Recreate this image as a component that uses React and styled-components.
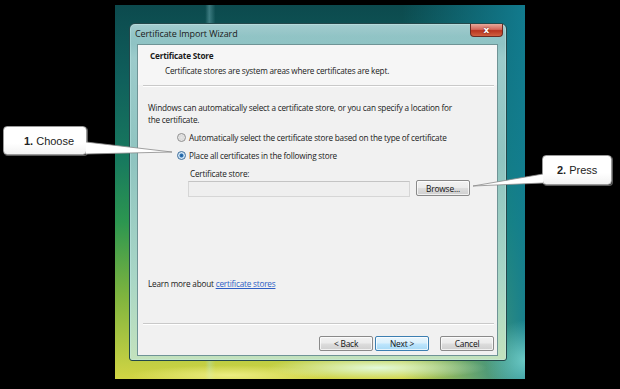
import React from "react";
import styled, { createGlobalStyle } from "styled-components";

const Global = createGlobalStyle`
  html, body { margin: 0; padding: 0; background: #000; }
  body { width: 620px; height: 389px; overflow: hidden; font-family: "Open Sans", "Noto Sans", sans-serif; }
  #root { width: 620px; height: 389px; }
`;

const Stage = styled.div`
  position: relative;
  width: 620px;
  height: 389px;
  background: #000;
  padding: 5px 0 0 115px;
  box-sizing: border-box;
`;

const Wallpaper = styled.div`
  width: 410px;
  height: 374px;
  box-sizing: border-box;
  padding: 18px 0 0 14px;
  background:
    radial-gradient(ellipse 110px 12px at 64% 97%, rgba(230, 255, 235, 0.9), rgba(230,255,235,0) 100%),
    radial-gradient(ellipse 100px 10px at 28% 99%, rgba(245, 245, 150, 0.75), rgba(245,245,150,0) 100%),
    radial-gradient(ellipse 40px 40px at 100% 95%, rgba(140, 230, 220, 0.7), rgba(140,230,220,0) 100%),
    linear-gradient(90deg, rgba(0,0,0,0) 0%, rgba(0,0,0,0) 70%, rgba(18, 125, 145, 0.95) 100%),
    linear-gradient(90deg, rgba(0,0,0,0) 22%, rgba(170,230,240,0.3) 23%, rgba(0,0,0,0) 24.5%),
    linear-gradient(180deg, #0c4a4e 0%, #10605c 20%, #187a5e 42%, #2c9650 58%, #7fb43e 78%, #d2d544 100%);
`;

const Window = styled.div`
  width: 378px;
  height: 338px;
  display: flex;
  flex-direction: column;
  box-sizing: border-box;
  border: 1px solid #23484b;
  border-radius: 6px 6px 3px 3px;
  background: linear-gradient(180deg, #7db8bb 0%, #9ccbcb 10%, #8fc4c0 40%, #a8d6c6 75%, #c3e2bd 100%);
  box-shadow: 0 0 0 1px rgba(200, 240, 240, 0.35) inset;
`;

const TitleBar = styled.div`
  height: 19px;
  display: flex;
  align-items: center;
  justify-content: space-between;
  padding: 0 3px 1px 5px;
  background: linear-gradient(180deg, rgba(255,255,255,0.3) 0%, rgba(255,255,255,0.08) 60%, rgba(255,255,255,0) 100%);
  border-radius: 5px 5px 0 0;
`;

const Title = styled.span`
  font-size: 9px;
  color: #1a1a1a;
  letter-spacing: -0.1px;
`;

const CloseBtn = styled.div`
  width: 31px;
  height: 12px;
  margin-top: -6px;
  border: 1px solid #6b2a22;
  border-top: none;
  border-radius: 0 0 4px 4px;
  background: linear-gradient(180deg, #e6a89a 0%, #d4685a 45%, #b8341f 55%, #d06040 100%);
  display: flex;
  align-items: center;
  justify-content: center;
  color: #fff;
  font-family: "DejaVu Sans", sans-serif;
  font-weight: bold;
  font-size: 9px;
  line-height: 1;
  text-shadow: 0 0 2px #5a1a10;
`;

const Panel = styled.div`
  flex: 1;
  margin: 0 8px 4px 7px;
  border: 1px solid #6f9496;
  background: #f1f1f1;
  display: flex;
  flex-direction: column;
  font-size: 8.2px;
  color: #1a1a1a;
  letter-spacing: -0.2px;
`;

const Header = styled.div`
  height: 40px;
  box-sizing: border-box;
  padding: 5px 0 0 12px;
  background: #f6f6f6;
`;

const HeaderTitle = styled.div`
  font-weight: bold;
  line-height: 12px;
`;

const HeaderSub = styled.div`
  line-height: 12px;
  margin: 3px 0 0 15px;
`;

const Rule = styled.div`
  height: 1px;
  margin: 0 3px 0 5px;
  background: #c9c9c9;
  border-bottom: 1px solid #fff;
`;

const Body = styled.div`
  padding: 15px 0 0 10px;
  display: flex;
  flex-direction: column;
`;

const Para = styled.div`
  line-height: 12px;
  width: 310px;
`;

const RadioRow = styled.label`
  display: flex;
  align-items: center;
  gap: 3px;
  height: 12px;
  margin: ${(p) => p.$mt}px 0 0 29px;
`;

const RadioDot = styled.span`
  width: 7px;
  height: 7px;
  border-radius: 50%;
  border: 1px solid ${(p) => (p.$on ? "#3d6e9c" : "#8f8f8f")};
  background: ${(p) =>
    p.$on
      ? "radial-gradient(circle, #1f5c9a 0, #2f76b8 1.6px, #cfe4f5 2.4px, #e9f2fa 100%)"
      : "radial-gradient(circle, #e6e6e6 0, #dcdcdc 2px, #f4f4f4 100%)"};
  flex: none;
`;

const FieldLabel = styled.div`
  line-height: 12px;
  margin: 7px 0 0 42px;
`;

const FieldRow = styled.div`
  display: flex;
  align-items: flex-start;
  gap: 6px;
  margin: 0 0 0 40px;
`;

const Input = styled.div`
  width: 222px;
  height: 16px;
  margin-top: 1px;
  box-sizing: border-box;
  border: 1px solid #d6d6d6;
  border-top-color: #c4c4c4;
  background: #efefef;
`;

const Btn = styled.div`
  width: 54px;
  height: ${(p) => p.$h || 15}px;
  box-sizing: border-box;
  border: 1px solid ${(p) => (p.$def ? "#3c7fb1" : "#8a8a8a")};
  border-radius: 2px;
  background: ${(p) =>
    p.$def
      ? "linear-gradient(180deg, #eaf6fd 0%, #d9f0fc 48%, #bee6fd 52%, #a7d9f5 100%)"
      : "linear-gradient(180deg, #f2f2f2 0%, #ebebeb 48%, #dddddd 52%, #cfcfcf 100%)"};
  box-shadow: inset 0 0 0 1px rgba(255,255,255,0.7);
  display: flex;
  align-items: center;
  justify-content: center;
  font-size: 8.4px;
  color: #111;
`;

const Learn = styled.div`
  line-height: 12px;
  margin-top: 81px;
`;

const Link = styled.a`
  color: #2f5fc4;
  text-decoration: underline;
`;

const FooterRule = styled(Rule)`
  margin-top: 33px;
`;

const Footer = styled.div`
  display: flex;
  justify-content: flex-end;
  gap: 2px;
  padding: 11px 3px 0 0;
`;

const Gap = styled.span`
  width: 7px;
`;

const Callout = styled.div`
  position: absolute;
  left: ${(p) => p.$x}px;
  top: ${(p) => p.$y}px;
  width: ${(p) => p.$w}px;
  height: ${(p) => p.$h}px;
  box-sizing: border-box;
  border: 1px solid #9a9a9a;
  border-radius: 4px;
  background: linear-gradient(180deg, #ffffff 0%, #ffffff 60%, #f2f2f2 100%);
  box-shadow: 1px 1px 0 #5a5a5a;
  display: flex;
  align-items: center;
  padding-left: ${(p) => p.$pl}px;
  font-family: "Liberation Sans", Arial, sans-serif;
  font-size: 11px;
  color: #222;
  z-index: 2;
  b { font-weight: bold; margin-right: 3px; }
`;

const Pointers = styled.svg`
  position: absolute;
  left: 0;
  top: 0;
  z-index: 3;
  pointer-events: none;
`;

export default function App() {
  return (
    <>
      <Global />
      <Stage>
        <Wallpaper>
          <Window>
            <TitleBar>
              <Title>Certificate Import Wizard</Title>
              <CloseBtn>x</CloseBtn>
            </TitleBar>
            <Panel>
              <Header>
                <HeaderTitle>Certificate Store</HeaderTitle>
                <HeaderSub>Certificate stores are system areas where certificates are kept.</HeaderSub>
              </Header>
              <Rule />
              <Body>
                <Para>
                  Windows can automatically select a certificate store, or you can specify a location for
                  the certificate.
                </Para>
                <RadioRow $mt={5}>
                  <RadioDot />
                  Automatically select the certificate store based on the type of certificate
                </RadioRow>
                <RadioRow $mt={6}>
                  <RadioDot $on />
                  Place all certificates in the following store
                </RadioRow>
                <FieldLabel>Certificate store:</FieldLabel>
                <FieldRow>
                  <Input />
                  <Btn $h={16}>Browse...</Btn>
                </FieldRow>
                <Learn>
                  Learn more about <Link>certificate stores</Link>
                </Learn>
              </Body>
              <FooterRule />
              <Footer>
                <Btn>&lt; Back</Btn>
                <Btn $def>Next &gt;</Btn>
                <Gap />
                <Btn>Cancel</Btn>
              </Footer>
            </Panel>
          </Window>
        </Wallpaper>

        <Callout $x={3} $y={126} $w={84} $h={29} $pl={20}>
          <b>1.</b>Choose
        </Callout>
        <Callout $x={542} $y={155} $w={70} $h={30} $pl={14}>
          <b>2.</b>Press
        </Callout>
        <Pointers width="620" height="389" viewBox="0 0 620 389">
          <polygon points="86,142 172,152 86,154" fill="#ffffff" />
          <polyline points="86,142 172,152 86,154" fill="none" stroke="#8a8a8a" strokeWidth="0.8" />
          <polygon points="543,174 473,186 543,183" fill="#ffffff" />
          <polyline points="543,174 473,186 543,183" fill="none" stroke="#8a8a8a" strokeWidth="0.8" />
        </Pointers>
      </Stage>
    </>
  );
}
